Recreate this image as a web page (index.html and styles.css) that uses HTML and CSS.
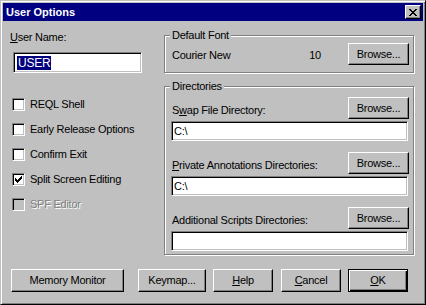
FILE: index.html
```html
<!DOCTYPE html>
<html lang="en">
<head>
    <meta charset="UTF-8">
    <title>User Options</title>
    <link rel="stylesheet" href="styles.css">
</head>
<body>
    <div class="window">
        <div class="titlebar">
            <span class="title">User Options</span>
            <button class="close-btn" title="Close">
                <svg width="8" height="7" viewBox="0 0 8 7" shape-rendering="crispEdges">
                    <path d="M0 0h2v1h-2zM6 0h2v1h-2zM1 1h2v1h-2zM5 1h2v1h-2zM2 2h4v1h-4zM3 3h2v1h-2zM2 4h4v1h-4zM1 5h2v1h-2zM5 5h2v1h-2zM0 6h2v1h-2zM6 6h2v1h-2z" fill="#000"/>
                </svg>
            </button>
        </div>

        <div class="dialog">
            <div class="main">
                <div class="left">
                    <label class="field-label"><u>U</u>ser Name:</label>
                    <div class="edit user-edit"><span class="selected">USER</span></div>

                    <ul class="checks">
                        <li><span class="checkbox"></span>REQL Shell</li>
                        <li><span class="checkbox"></span>Early Release Options</li>
                        <li><span class="checkbox"></span>Confirm Exit</li>
                        <li>
                            <span class="checkbox">
                                <svg width="7" height="7" viewBox="0 0 7 7" shape-rendering="crispEdges">
                                    <path d="M6 0h1v3h-1zM5 1h1v3h-1zM4 2h1v3h-1zM3 3h1v3h-1zM2 4h1v3h-1zM1 3h1v3h-1zM0 2h1v3h-1z" fill="#000"/>
                                </svg>
                            </span>Split Screen Editing
                        </li>
                        <li class="disabled"><span class="checkbox"></span>SPF Editor</li>
                    </ul>
                </div>

                <div class="right">
                    <fieldset class="group font-group">
                        <legend>Default Font</legend>
                        <div class="font-row">
                            <span class="font-name">Courier New</span>
                            <span class="font-size">10</span>
                            <button class="btn browse">Browse...</button>
                        </div>
                    </fieldset>

                    <fieldset class="group dir-group">
                        <legend>Directories</legend>
                        <div class="dir">
                            <div class="dir-head">
                                <span class="dir-label">S<u>w</u>ap File Directory:</span>
                                <button class="btn browse">Browse...</button>
                            </div>
                            <div class="edit dir-edit">C:\</div>
                        </div>
                        <div class="dir">
                            <div class="dir-head">
                                <span class="dir-label"><u>P</u>rivate Annotations Directories:</span>
                                <button class="btn browse">Browse...</button>
                            </div>
                            <div class="edit dir-edit">C:\</div>
                        </div>
                        <div class="dir">
                            <div class="dir-head">
                                <span class="dir-label">Additional Scripts Directories:</span>
                                <button class="btn browse">Browse...</button>
                            </div>
                            <div class="edit dir-edit"></div>
                        </div>
                    </fieldset>
                </div>
            </div>

            <div class="buttons">
                <button class="btn memory">Memory Monitor</button>
                <button class="btn keymap">Keymap...</button>
                <button class="btn help"><u>H</u>elp</button>
                <button class="btn cancel"><u>C</u>ancel</button>
                <button class="btn ok default"><u>O</u>K</button>
            </div>
        </div>
    </div>
</body>
</html>
```

FILE: styles.css
```css
* {
    box-sizing: border-box;
}
body {
    margin: 0;
    background: #c0c0c0;
    font-family: "Liberation Sans", Arial, sans-serif;
    font-size: 11px;
    line-height: 13px;
    letter-spacing: -0.25px;
    color: #000;
}
u {
    text-decoration: underline;
    text-underline-offset: 1px;
}
.window {
    width: 426px;
    height: 305px;
    background: #c0c0c0;
    border: 1px solid;
    border-color: #c0c0c0 #000 #000 #c0c0c0;
    box-shadow: inset 1px 1px #fff, inset -1px -1px #808080;
    padding: 2px;
}
.titlebar {
    height: 18px;
    background: #000080;
    color: #fff;
    font-weight: bold;
    letter-spacing: 0;
    display: flex;
    align-items: center;
    justify-content: space-between;
    padding: 0 2px 0 3px;
}
.close-btn {
    width: 16px;
    height: 14px;
    padding: 0;
    background: #c0c0c0;
    border: 1px solid;
    border-color: #fff #000 #000 #fff;
    box-shadow: inset -1px -1px #808080;
    display: flex;
    align-items: center;
    justify-content: center;
}
.btn {
    font: inherit;
    letter-spacing: inherit;
    color: #000;
    background: #c0c0c0;
    border: 1px solid;
    border-color: #fff #000 #000 #fff;
    box-shadow: inset -1px -1px #808080;
    padding: 0;
    height: 23px;
    flex: none;
}
.btn.default {
    border-color: #000;
    box-shadow: inset 1px 1px #fff, inset -1px -1px #000, inset -2px -2px #808080;
}
.edit {
    background: #fff;
    border: 1px solid;
    border-color: #808080 #fff #fff #808080;
    box-shadow: inset 1px 1px #000, inset -1px -1px #c0c0c0;
    padding: 3px 2px 0;
}

/* left column */
.main {
    display: flex;
    padding-top: 8px;
}
.left {
    width: 161px;
    padding-left: 7px;
}
.field-label {
    display: block;
    margin-top: 2px;
}
.user-edit {
    width: 129px;
    height: 21px;
    margin: 8px 0 0 3px;
    padding: 4px 0 0 3px;
    font-size: 12px;
}
.selected {
    background: #000080;
    color: #fff;
    padding: 0 1px;
}
.checks {
    list-style: none;
    margin: 25px 0 0;
    padding: 0;
    display: flex;
    flex-direction: column;
    gap: 12px;
}
.checks li {
    display: flex;
    align-items: center;
    height: 13px;
}
.checkbox {
    width: 13px;
    height: 13px;
    margin: 0 5px 0 2px;
    background: #fff;
    border: 1px solid;
    border-color: #808080 #fff #fff #808080;
    box-shadow: inset 1px 1px #000, inset -1px -1px #c0c0c0;
    display: flex;
    align-items: center;
    justify-content: center;
}
.checks .disabled {
    color: #808080;
    text-shadow: 1px 1px #fff;
}
.disabled .checkbox {
    background: #c0c0c0;
}

/* right column */
.right {
    width: 250px;
}
.group {
    margin: 0;
    border: 1px solid #808080;
    box-shadow: inset 1px 1px #fff, 1px 1px #fff;
    padding: 0 4px 0 6px;
}
.group legend {
    padding: 0 2px;
    margin-left: -1px;
    background: #c0c0c0;
}
.font-group {
    padding-top: 1px;
    padding-bottom: 7px;
}
.font-row {
    display: flex;
    align-items: center;
    padding-left: 1px;
}
.font-name,
.font-size {
    padding-top: 3px;
}
.font-name {
    flex: 1;
}
.font-size {
    margin-right: 27px;
}
.browse {
    width: 61px;
    height: 22px;
}
.dir-group {
    margin-top: 7px;
    padding-top: 4px;
    padding-bottom: 3px;
}
.dir + .dir {
    margin-top: 11px;
}
.dir-head {
    display: flex;
    align-items: flex-end;
    justify-content: space-between;
}
.dir-label {
    margin: 0 0 2px 1px;
}
.dir-edit {
    width: 237px;
    height: 20px;
    margin-top: 2px;
}

/* bottom buttons */
.buttons {
    display: flex;
    margin-top: 14px;
    padding-left: 8px;
}
.memory {
    width: 113px;
}
.keymap {
    width: 68px;
    margin-left: 14px;
}
.help {
    width: 60px;
    margin-left: 7px;
}
.cancel {
    width: 60px;
    margin-left: 8px;
}
.ok {
    width: 60px;
    margin-left: 7px;
}
```
